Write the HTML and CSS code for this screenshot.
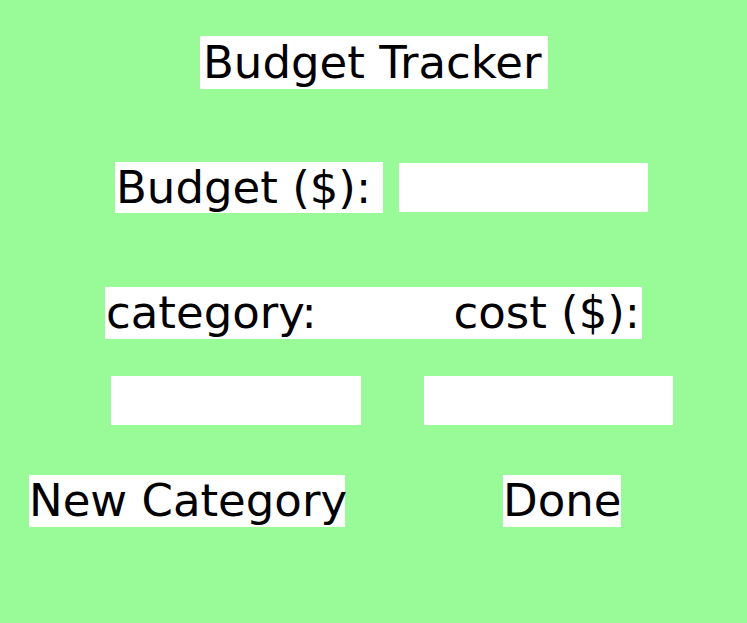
FILE: index.html
```html
<!DOCTYPE html>
<html>
<head>
<meta charset="utf-8">
<title>Budget Tracker</title>
<link rel="stylesheet" href="styles.css">
</head>
<body>
<div class="app">
  <div class="row row-title"><div class="label title">Budget Tracker</div></div>
  <div class="row row-budget">
    <div class="label budget-label">Budget ($):</div>
    <input class="entry budget-entry" type="text">
  </div>
  <div class="row row-heads">
    <div class="label heads"><span>category:</span><span>cost ($):</span></div>
  </div>
  <div class="row row-entries">
    <input class="entry cat-entry" type="text">
    <input class="entry cost-entry" type="text">
  </div>
  <div class="row row-buttons">
    <button class="label btn btn-new">New Category</button>
    <button class="label btn btn-done">Done</button>
  </div>
</div>
</body>
</html>
```

FILE: styles.css
```css
html, body {
  margin: 0;
  padding: 0;
  background: #98fb98;
  width: 747px;
  height: 623px;
  overflow: hidden;
}
.app {
  display: flex;
  flex-direction: column;
  padding-top: 36px;
  font-family: "DejaVu Sans", sans-serif;
  font-size: 45px;
  color: #000;
}
.row {
  display: flex;
  align-items: center;
}
.label {
  background: #fff;
  box-sizing: border-box;
  line-height: 51px;
  white-space: pre;
}
.title {
  margin-left: 200px;
  width: 348px;
  height: 53px;
  padding: 1px 0 0 3px;
  text-align: left;
}
.row-budget {
  margin-top: 73px;
  margin-left: 115px;
  gap: 16px;
}
.budget-label {
  width: 268px;
  height: 51px;
  padding-left: 1px;
}
.entry {
  background: #fff;
  border: none;
  outline: none;
  margin: 0;
  padding: 0;
  height: 49px;
  box-sizing: border-box;
}
.budget-entry { width: 249px; }
.row-heads {
  margin-top: 74px;
  margin-left: 105px;
}
.heads {
  width: 537px;
  height: 52px;
  display: flex;
  justify-content: space-between;
  padding: 0 2px 0 1px;
}
.row-entries {
  margin-top: 37px;
  margin-left: 111px;
  gap: 63px;
}
.cat-entry { width: 250px; }
.cost-entry { width: 249px; }
.row-buttons {
  margin-top: 50px;
  margin-left: 29px;
  gap: 158px;
}
.btn {
  border: none;
  margin: 0;
  padding: 0;
  height: 52px;
  font: inherit;
  line-height: 52px;
  color: #000;
  text-align: center;
}
.btn-new { width: 316px; }
.btn-done { width: 118px; }
```
